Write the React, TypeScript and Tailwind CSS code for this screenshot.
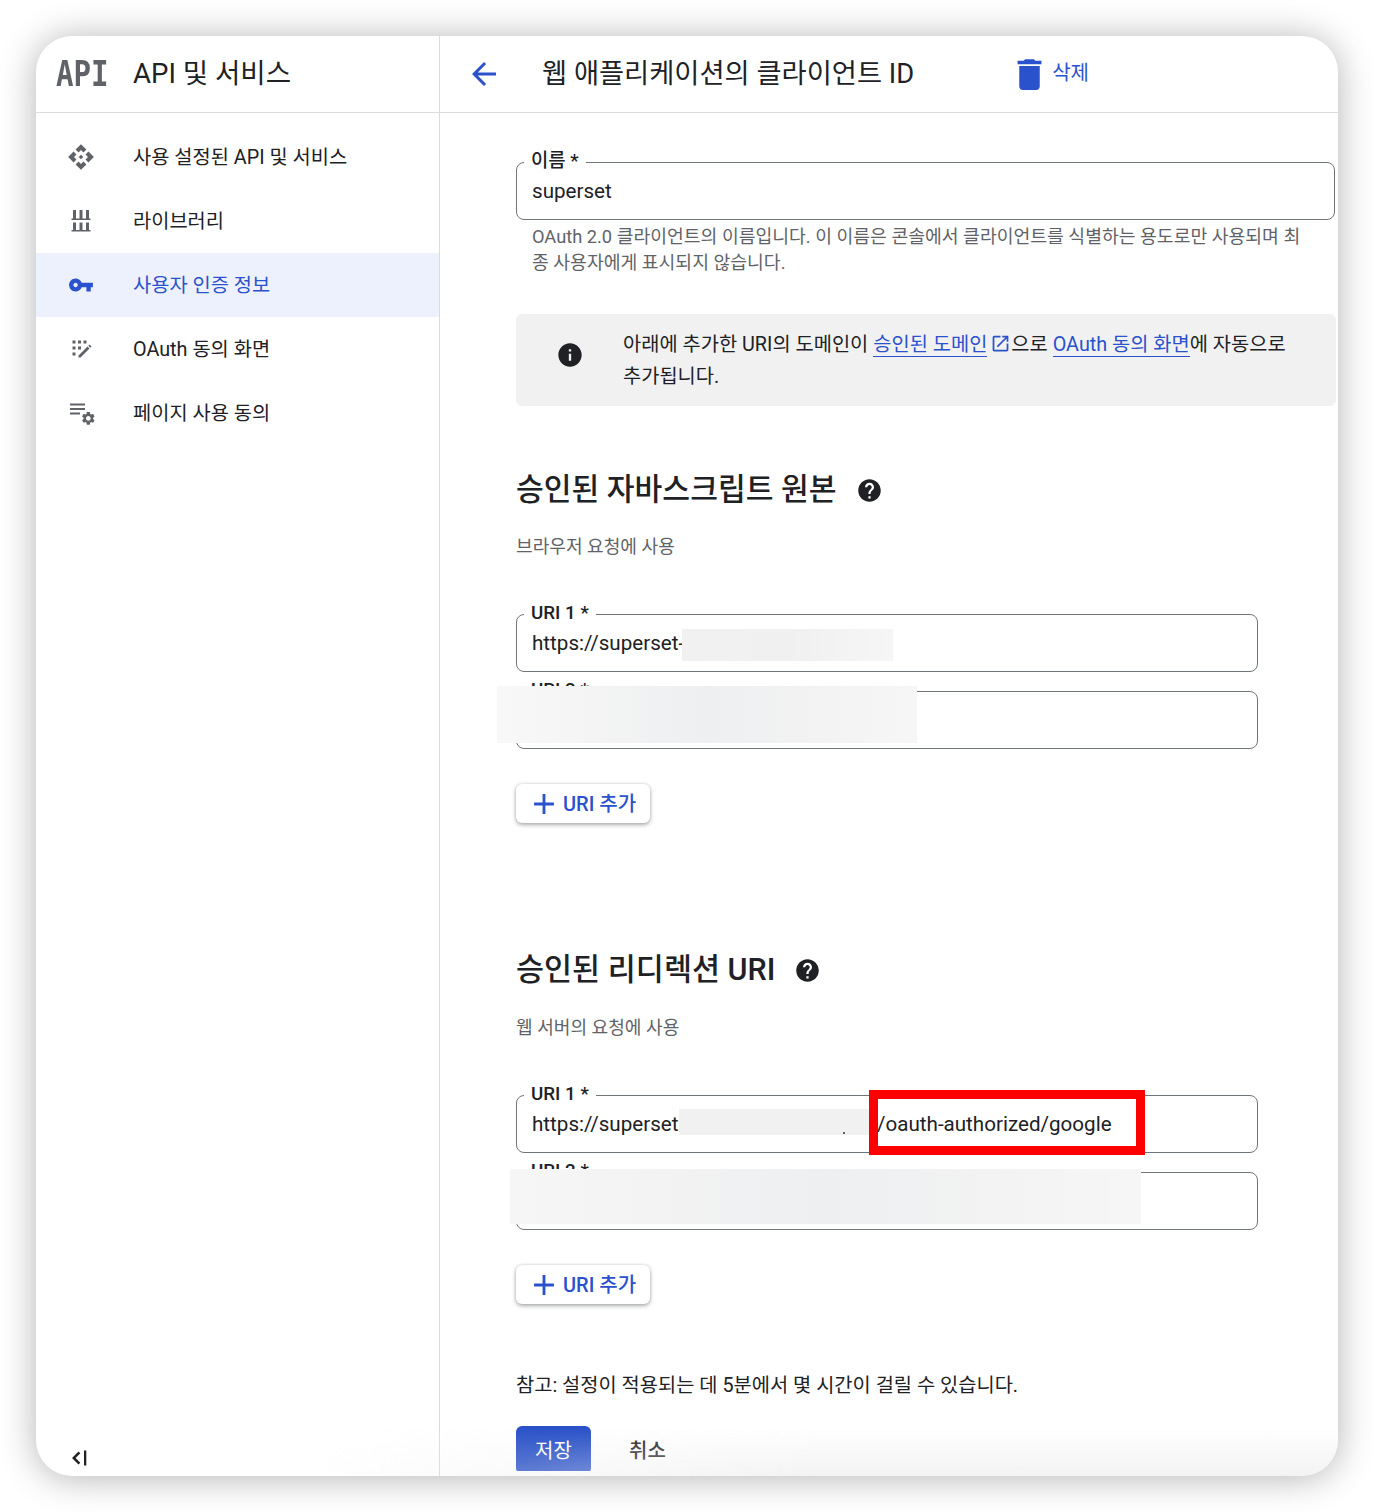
const font = "font-['Roboto','Noto_Sans_CJK_KR',sans-serif]"

const Icon = ({ d, className }: { d: string; className: string }) => (
    <svg viewBox="0 0 24 24" fill="currentColor" className={className}>
        <path d={d} />
    </svg>
)

const icons = {
    back: 'M20 11H7.83l5.59-5.59L12 4l-8 8 8 8 1.41-1.41L7.83 13H20v-2z',
    trash: 'M6 19c0 1.1.9 2 2 2h8c1.1 0 2-.9 2-2V7H6v12zM19 4h-3.5l-1-1h-5l-1 1H5v2h14V4z',
    key: 'M12.65 10C11.83 7.67 9.61 6 7 6c-3.31 0-6 2.69-6 6s2.69 6 6 6c2.61 0 4.83-1.67 5.65-4H17v4h4v-4h2v-4H12.65zM7 14c-1.1 0-2-.9-2-2s.9-2 2-2 2 .9 2 2-.9 2-2 2z',
    info: 'M12 2C6.48 2 2 6.48 2 12s4.48 10 10 10 10-4.48 10-10S17.52 2 12 2zm1 15h-2v-6h2v6zm0-8h-2V7h2v2z',
    help: 'M12 2C6.48 2 2 6.48 2 12s4.48 10 10 10 10-4.48 10-10S17.52 2 12 2zm1 17h-2v-2h2v2zm2.07-7.75l-.9.92C13.45 12.9 13 13.5 13 15h-2v-.5c0-1.1.45-2.1 1.17-2.83l1.24-1.26c.37-.36.59-.86.59-1.41 0-1.1-.9-2-2-2s-2 .9-2 2H8c0-2.21 1.79-4 4-4s4 1.79 4 4c0 .88-.36 1.68-.93 2.25z',
    add: 'M19 13h-6v6h-2v-6H5v-2h6V5h2v6h6v2z',
    open: 'M19 19H5V5h7V3H5c-1.11 0-2 .9-2 2v14c0 1.1.89 2 2 2h14c1.1 0 2-.9 2-2v-7h-2v7zM14 3v2h3.59l-9.83 9.83 1.41 1.41L19 6.41V10h2V3h-7z',
    services: 'M14 12l-2 2-2-2 2-2 2 2zm-2-6l2.12 2.12 2.5-2.5L12 1 7.38 5.62l2.5 2.5L12 6zm-6 6l2.12-2.12-2.5-2.5L1 12l4.62 4.62 2.5-2.5L6 12zm12 0l-2.12 2.12 2.5 2.5L23 12l-4.62-4.62-2.5 2.5L18 12zm-6 6l-2.12-2.12-2.5 2.5L12 23l4.62-4.62-2.5-2.5L12 18z',
    library: 'M4 1h3v8.500H4zM10.500 1h3v8.500h-3zM17 1h3v8.500h-3zM2.500 9.500h19V11h-19zM4 13.500h3V21H4zM10.500 13.500h3V21h-3zM17 13.500h3V21h-3zM2.500 21h19v1.500h-19z',
    consent: 'M3.500 3.500h3v3h-3zM9 3.500h3v3H9zM14.500 3.500h3v3h-3zM3.500 9.500h3v3h-3zM9 9.500h3v3H9zM3.500 15.500h3v3h-3zM9.500 18.500L18.500 9.500l2 2-9 9h-2zM19.300 8.700l1.200-1.200 2 2-1.200 1.200z',
    collapse: 'M9.500 5.500l1.800 1.800L6.600 12l4.700 4.700-1.800 1.800L3 12zM15 4.500h2.300v15H15z',
}

const gear = 'M19.14,12.94c0.04-0.3,0.06-0.61,0.06-0.94c0-0.32-0.02-0.64-0.07-0.94l2.03-1.58c0.18-0.14,0.23-0.41,0.12-0.61 l-1.92-3.32c-0.12-0.22-0.37-0.29-0.59-0.22l-2.39,0.96c-0.5-0.38-1.03-0.7-1.62-0.94L14.4,2.81c-0.04-0.24-0.24-0.41-0.48-0.41 h-3.84c-0.24,0-0.43,0.17-0.47,0.41L9.25,5.35C8.66,5.59,8.12,5.92,7.63,6.29L5.24,5.33c-0.22-0.08-0.47,0-0.59,0.22L2.74,8.87 C2.62,9.08,2.66,9.34,2.86,9.48l2.03,1.58C4.84,11.36,4.8,11.69,4.8,12s0.02,0.64,0.07,0.94l-2.03,1.58 c-0.18,0.14-0.23,0.41-0.12,0.61l1.92,3.32c0.12,0.22,0.37,0.29,0.59,0.22l2.39-0.96c0.5,0.38,1.03,0.7,1.62,0.94l0.36,2.54 c0.05,0.24,0.24,0.41,0.48,0.41h3.84c0.24,0,0.44-0.17,0.47-0.41l0.36-2.54c0.59-0.24,1.13-0.56,1.62-0.94l2.39,0.96 c0.22,0.08,0.47,0,0.59-0.22l1.92-3.32c0.12-0.22,0.07-0.47-0.12-0.61L19.14,12.94z M12,15.6c-1.98,0-3.6-1.62-3.6-3.6 s1.62-3.6,3.6-3.6s3.6,1.62,3.6,3.6S13.98,15.6,12,15.6z'

const UsageIcon = () => (
    <svg viewBox="0 0 24 24" fill="currentColor" className="h-[24px] w-[24px] overflow-visible text-[#5f6368]">
        <path d="M1 2.500h15v2H1zM1 7h15v2H1zM1 11.500h10v2H1z" />
        <g transform="translate(11.400 9.400) scale(0.66)">
            <path d={gear} />
        </g>
    </svg>
)

const nav = [
    { label: '사용 설정된 API 및 서비스', icon: icons.services, size: 'h-[28px] w-[28px] mx-[-2px]' },
    { label: '라이브러리', icon: icons.library, size: 'h-[24px] w-[24px]' },
    { label: '사용자 인증 정보', icon: icons.key, size: 'h-[26px] w-[26px] mx-[-1px]', active: true },
    { label: 'OAuth 동의 화면', icon: icons.consent, size: 'h-[24px] w-[24px]' },
    { label: '페이지 사용 동의', size: '' },
]

const Field = ({ label, children, className }: { label: string; children?: React.ReactNode; className: string }) => (
    <div className={`relative h-[58px] rounded-[8px] border border-[#70757a] ${className}`}>
        <span className="absolute left-[7px] top-[-14px] bg-white px-[7px] text-[18.8px] leading-[24px] font-medium text-[#202124]">
            {label}
        </span>
        <div className="flex h-full items-center whitespace-nowrap pl-[15px] text-[20.6px] text-[#202124]">{children}</div>
    </div>
)

const AddButton = () => (
    <button className="flex h-[39px] w-[134px] items-center gap-[2px] rounded-[6px] bg-white pl-[11px] text-[20px] font-medium text-[#2a52cc] shadow-[0_2px_4px_rgba(60,64,67,0.4),0_0_3px_rgba(60,64,67,0.2)]">
        <Icon d={icons.add} className="h-[34px] w-[34px]" />
        URI 추가
    </button>
)

const Heading = ({ title, size }: { title: string; size: string }) => (
    <div className="flex items-center gap-[19px]">
        <h2 className={`${size} leading-[40px] font-medium text-[#202124]`}>{title}</h2>
        <Icon d={icons.help} className="h-[27px] w-[27px] text-[#202124]" />
    </div>
)

export default function App() {
    return (
        <div className={`h-[1512px] w-[1374px] bg-white p-[36px] ${font}`}>
            <div className="relative flex h-[1440px] w-[1302px] overflow-hidden rounded-[36px] bg-white shadow-[0_2px_36px_rgba(0,0,0,0.3)]">
                <aside className="flex w-[404px] shrink-0 flex-col border-r border-[#dadce0]">
                    <div className="flex h-[77px] shrink-0 items-center border-b border-[#dadce0] pl-[20px]">
                        <span className="inline-block w-[77px] origin-left scale-x-[0.81] font-['DejaVu_Sans_Mono',monospace] text-[36px] leading-none font-bold whitespace-nowrap text-[#5f6368]">API</span>
                        <span className="text-[27.6px] text-[#202124]">API 및 서비스</span>
                    </div>
                    <nav className="flex-1 pt-[12px]">
                        {nav.map((item) => (
                            <div
                                key={item.label}
                                className={`flex h-[64px] items-center pl-[33px] text-[19.8px] ${item.active ? 'bg-[#edf1fd] text-[#2a52cc]' : 'text-[#202124]'}`}
                            >
                                {item.icon ? (
                                    <Icon d={item.icon} className={`${item.size} ${item.active ? 'text-[#2a52cc]' : 'text-[#5f6368]'}`} />
                                ) : (
                                    <UsageIcon />
                                )}
                                <span className="ml-[40px] mt-[2px]">{item.label}</span>
                            </div>
                        ))}
                    </nav>
                    <div className="flex h-[30px] shrink-0 items-start pl-[33px]">
                        <Icon d={icons.collapse} className="h-[24px] w-[24px] text-[#202124]" />
                    </div>
                </aside>

                <main className="flex min-w-0 flex-1 flex-col pb-[5px]">
                    <header className="flex h-[77px] shrink-0 items-center border-b border-[#dadce0]">
                        <Icon d={icons.back} className="ml-[26px] h-[36px] w-[36px] text-[#2a52cc]" />
                        <h1 className="ml-[40px] text-[27.3px] text-[#202124]">웹 애플리케이션의 클라이언트 ID</h1>
                        <Icon d={icons.trash} className="ml-[95px] h-[41px] w-[41px] text-[#2a52cc]" />
                        <span className="mb-[2px] ml-[2px] text-[20px] text-[#2a52cc]">삭제</span>
                    </header>

                    <div className="min-h-0 flex-1 overflow-hidden pl-[76px]">
                        <Field label="이름 *" className="mt-[49px] w-[819px]">superset</Field>
                        <p className="mt-[4px] w-[790px] pl-[16px] text-[18.25px] leading-[26px] text-[#5f6368]">
                            OAuth 2.0 클라이언트의 이름입니다. 이 이름은 콘솔에서 클라이언트를 식별하는 용도로만 사용되며 최종 사용자에게 표시되지 않습니다.
                        </p>

                        <div className="mt-[38px] flex h-[92px] w-[820px] items-center rounded-[6px] bg-[#f1f1f2] pl-[40px] text-[19.8px] leading-[32px] text-[#202124]">
                            <Icon d={icons.info} className="mb-[10px] h-[28px] w-[28px] shrink-0" />
                            <p className="ml-[39px] mt-[2px] w-[680px]">
                                아래에 추가한 URI의 도메인이{' '}
                                <span className="border-b border-[#2a52cc] text-[#2a52cc]">승인된 도메인</span>
                                <Icon d={icons.open} className="ml-[3px] inline-block h-[21px] w-[21px] align-[-3px] text-[#2a52cc]" />
                                으로{' '}
                                <span className="border-b border-[#2a52cc] text-[#2a52cc]">OAuth 동의 화면</span>
                                에 자동으로 추가됩니다.
                            </p>
                        </div>

                        <div className="mt-[64px]"><Heading title="승인된 자바스크립트 원본" size="text-[30.2px]" /></div>
                        <p className="mt-[24px] text-[18.1px] leading-[26px] text-[#5f6368]">브라우저 요청에 사용</p>

                        <Field label="URI 1 *" className="mt-[54px] w-[742px]">
                            https://superset-
                            <div className="absolute left-[165px] top-[14px] h-[32px] w-[211px] bg-gradient-to-r from-[#f1f1f2] via-[#f0f0f1] to-[#f6f6f6]" />
                        </Field>
                        <Field label="URI 2 *" className="mt-[19px] w-[742px]">
                            <div className="absolute left-[-20px] top-[-6px] h-[57px] w-[420px] bg-gradient-to-r from-[#f8f8f8] via-[#eeeff0] to-[#f6f6f6]" />
                        </Field>
                        <div className="mt-[35px]"><AddButton /></div>

                        <div className="mt-[127px]"><Heading title="승인된 리디렉션 URI" size="text-[30.5px]" /></div>
                        <p className="mt-[25px] text-[18.1px] leading-[26px] text-[#5f6368]">웹 서버의 요청에 사용</p>

                        <Field label="URI 1 *" className="mt-[54px] w-[742px]">
                            https://superset
                            <div className="absolute left-[162px] top-[13px] h-[26px] w-[190px] bg-[#f1f1f2]" />
                            <div className="absolute left-[326px] top-[36px] h-[2px] w-[2px] bg-[#5f6368]" />
                            <span className="absolute left-[360px]">/oauth-authorized/google</span>
                            <div className="absolute left-[352px] top-[-6px] h-[65px] w-[276px] border-[9px] border-[#ff0000]" />
                        </Field>
                        <Field label="URI 2 *" className="mt-[19px] w-[742px]">
                            <div className="absolute left-[-7px] top-[-4px] h-[55px] w-[631px] bg-gradient-to-r from-[#f6f6f6] via-[#eeeff0] to-[#f6f6f6]" />
                        </Field>
                        <div className="mt-[35px]"><AddButton /></div>

                        <p className="mt-[68px] text-[19.8px] leading-[28px] text-[#202124]">참고: 설정이 적용되는 데 5분에서 몇 시간이 걸릴 수 있습니다.</p>

                        <div className="mt-[26px] flex items-center">
                            <button className="h-[48px] w-[75px] rounded-[6px] bg-[#2850c8] pt-[1px] text-[20px] text-white">저장</button>
                            <button className="ml-[38px] pt-[2px] text-[20px] font-medium text-[#202124]">취소</button>
                        </div>
                    </div>
                </main>

                <div className="pointer-events-none absolute inset-x-0 bottom-0 h-[50px] bg-gradient-to-b from-transparent to-[#eeeeee]/70 [mask-image:linear-gradient(to_right,transparent_20%,black_60%)]" />
            </div>
        </div>
    )
}
